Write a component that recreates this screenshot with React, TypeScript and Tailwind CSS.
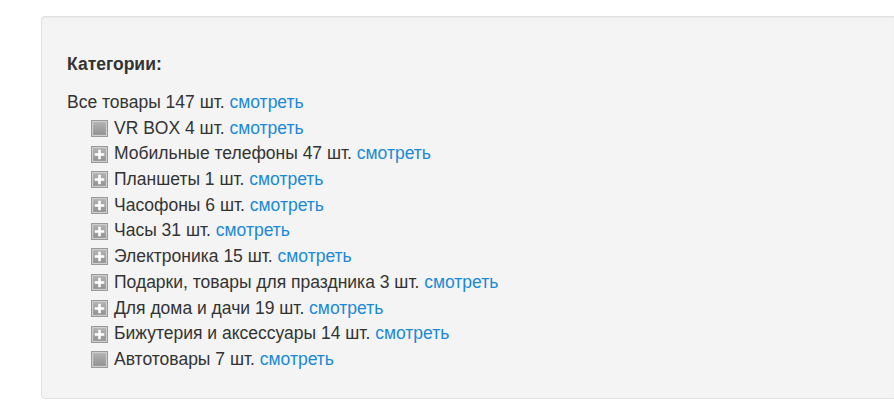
import React from 'react';

const items = [
  { name: 'VR BOX', count: 4, sub: false },
  { name: 'Мобильные телефоны', count: 47, sub: true },
  { name: 'Планшеты', count: 1, sub: true },
  { name: 'Часофоны', count: 6, sub: true },
  { name: 'Часы', count: 31, sub: true },
  { name: 'Электроника', count: 15, sub: true },
  { name: 'Подарки, товары для праздника', count: 3, sub: true },
  { name: 'Для дома и дачи', count: 19, sub: true },
  { name: 'Бижутерия и аксессуары', count: 14, sub: true },
  { name: 'Автотовары', count: 7, sub: false },
];

function TreeIcon({ plus }: { plus: boolean }) {
  return (
    <svg width="17" height="17" viewBox="0 0 16 16" className="shrink-0">
      <defs>
        <linearGradient id={plus ? 'gp' : 'gn'} x1="0" y1="0" x2="0" y2="1">
          <stop offset="0" stopColor="#b2b2b2" />
          <stop offset="1" stopColor="#939393" />
        </linearGradient>
      </defs>
      <rect x="0.5" y="0.5" width="15" height="15" fill="#d2d2d2" stroke="#9a9a9a" />
      <rect x="2" y="2" width="12" height="12" fill={`url(#${plus ? 'gp' : 'gn'})`} />
      {plus && <path d="M3.5 8h9M8 3.5v9" stroke="#fff" strokeWidth="2.4" />}
    </svg>
  );
}

export default function App() {
  return (
    <div className="bg-white min-h-[412px] pt-4 pl-[41px] font-['Liberation_Sans',Arial,sans-serif] text-[17.5px] text-[#333]">
      <div className="bg-[#f4f4f4] border border-[#e3e3e3] border-r-0 rounded-l-[4px] shadow-[inset_0_1px_1px_rgba(0,0,0,0.05)] pl-[25px] pt-[34px] pb-[25px]">
        <h4 className="font-bold text-[17.5px] leading-[26px]">Категории:</h4>
        <div className="mt-[13px] leading-[25.7px]">
          <div>
            Все товары 147 шт. <a className="text-[#1a8ad6]">смотреть</a>
          </div>
          {items.map((it) => (
            <div key={it.name} className="flex items-center pl-[24px] h-[25.7px]">
              <TreeIcon plus={it.sub} />
              <span className="ml-[6px]">
                {it.name} {it.count} шт. <a className="text-[#1a8ad6]">смотреть</a>
              </span>
            </div>
          ))}
        </div>
      </div>
    </div>
  );
}
